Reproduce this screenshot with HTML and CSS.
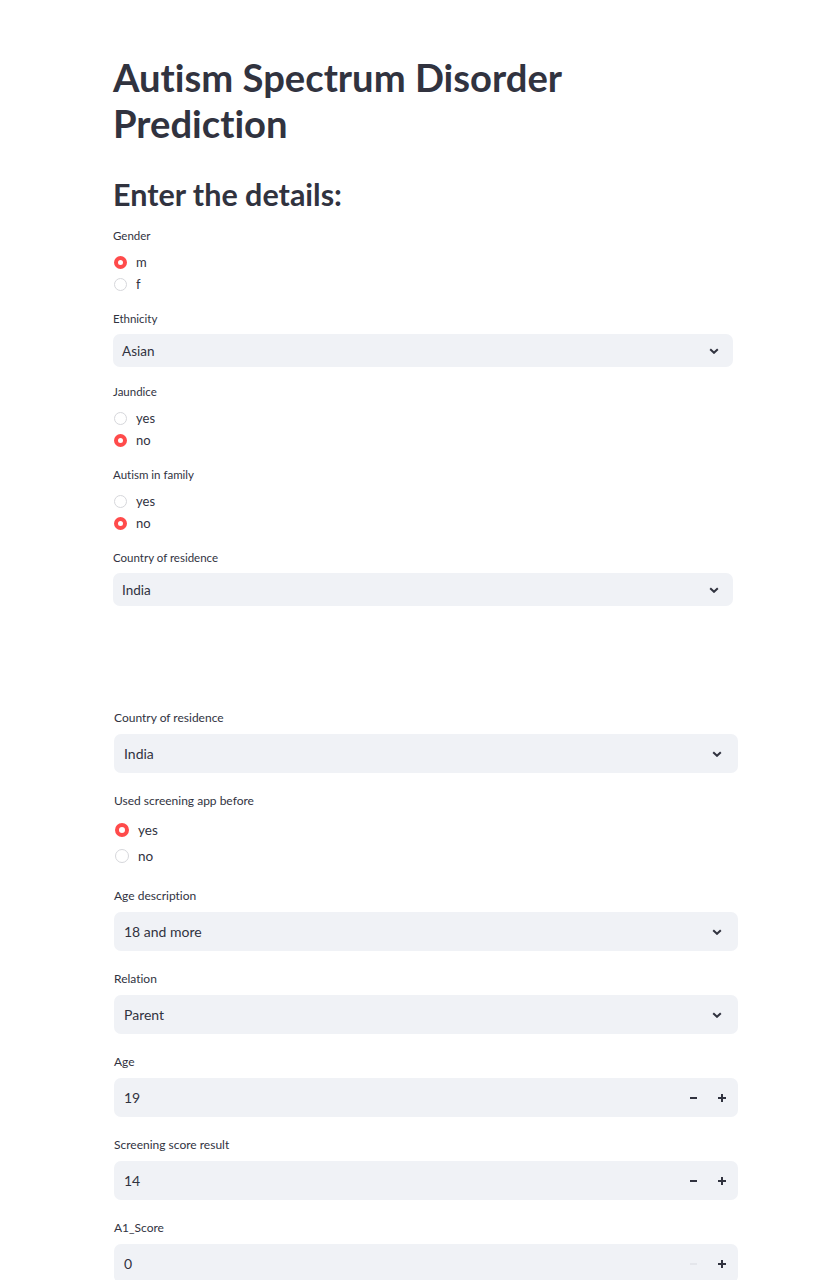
FILE: index.html
```html
<!DOCTYPE html>
<html lang="en">
<head>
<meta charset="utf-8">
<title>Autism Spectrum Disorder Prediction</title>
<link rel="stylesheet" href="styles.css">
</head>
<body>
<main class="page">
  <section class="block block-top">
    <h1 class="title">Autism Spectrum Disorder Prediction</h1>
    <h3 class="subtitle">Enter the details:</h3>

    <div class="field">
      <div class="label">Gender</div>
      <div class="radios">
        <div class="radio on"><span class="dot"></span><span>m</span></div>
        <div class="radio"><span class="dot"></span><span>f</span></div>
      </div>
    </div>

    <div class="field">
      <div class="label">Ethnicity</div>
      <div class="select"><span>Asian</span>
        <svg class="chev" viewBox="0 0 10 6" width="10" height="6"><path d="M1.2 1.2 L5 4.8 L8.8 1.2" fill="none" stroke="#31333f" stroke-width="2"/></svg>
      </div>
    </div>

    <div class="field">
      <div class="label">Jaundice</div>
      <div class="radios">
        <div class="radio"><span class="dot"></span><span>yes</span></div>
        <div class="radio on"><span class="dot"></span><span>no</span></div>
      </div>
    </div>

    <div class="field">
      <div class="label">Autism in family</div>
      <div class="radios">
        <div class="radio"><span class="dot"></span><span>yes</span></div>
        <div class="radio on"><span class="dot"></span><span>no</span></div>
      </div>
    </div>

    <div class="field">
      <div class="label">Country of residence</div>
      <div class="select"><span>India</span>
        <svg class="chev" viewBox="0 0 10 6" width="10" height="6"><path d="M1.2 1.2 L5 4.8 L8.8 1.2" fill="none" stroke="#31333f" stroke-width="2"/></svg>
      </div>
    </div>
  </section>

  <section class="block block-bottom">
    <div class="field">
      <div class="label">Country of residence</div>
      <div class="select"><span>India</span>
        <svg class="chev" viewBox="0 0 10 6" width="10" height="6"><path d="M1.2 1.2 L5 4.8 L8.8 1.2" fill="none" stroke="#31333f" stroke-width="2"/></svg>
      </div>
    </div>

    <div class="field">
      <div class="label">Used screening app before</div>
      <div class="radios">
        <div class="radio on"><span class="dot"></span><span>yes</span></div>
        <div class="radio"><span class="dot"></span><span>no</span></div>
      </div>
    </div>

    <div class="field">
      <div class="label">Age description</div>
      <div class="select"><span>18 and more</span>
        <svg class="chev" viewBox="0 0 10 6" width="10" height="6"><path d="M1.2 1.2 L5 4.8 L8.8 1.2" fill="none" stroke="#31333f" stroke-width="2"/></svg>
      </div>
    </div>

    <div class="field">
      <div class="label">Relation</div>
      <div class="select"><span>Parent</span>
        <svg class="chev" viewBox="0 0 10 6" width="10" height="6"><path d="M1.2 1.2 L5 4.8 L8.8 1.2" fill="none" stroke="#31333f" stroke-width="2"/></svg>
      </div>
    </div>

    <div class="field">
      <div class="label">Age</div>
      <div class="number"><span class="val">19</span>
        <span class="step minus"></span><span class="step plus"></span>
      </div>
    </div>

    <div class="field">
      <div class="label">Screening score result</div>
      <div class="number"><span class="val">14</span>
        <span class="step minus"></span><span class="step plus"></span>
      </div>
    </div>

    <div class="field">
      <div class="label">A1_Score</div>
      <div class="number"><span class="val">0</span>
        <span class="step minus off"></span><span class="step plus"></span>
      </div>
    </div>
  </section>
</main>
</body>
</html>
```

FILE: styles.css
```css
* { box-sizing: border-box; }

html, body {
  margin: 0;
  padding: 0;
  background: #ffffff;
}

body {
  font-family: Lato, "Noto Sans", "Liberation Sans", sans-serif;
  color: #31333f;
  height: 1280px;
  overflow: hidden;
  font-variant-ligatures: none;
}

.page {
  padding-left: 113px;
}

.block-top {
  width: 620px;
  padding-top: 54px;
}

.title {
  margin: 0;
  font-size: 38.2px;
  line-height: 46px;
  font-weight: 700;
  letter-spacing: 0;
  width: 480px;
}

.subtitle {
  margin: 30px 0 0;
  font-size: 30.5px;
  line-height: 36px;
  font-weight: 700;
}

.block-top .subtitle + .field { margin-top: 16px; }

.field { margin-top: 17px; }

.label {
  font-size: 11.5px;
  line-height: 16px;
  margin-bottom: 7px;
  color: #31333f;
}

.radios { display: flex; flex-direction: column; margin-bottom: -1px; }

.radio {
  display: flex;
  align-items: center;
  height: 22px;
  gap: 9px;
  font-size: 13px;
  padding-left: 1px;
}

.dot {
  width: 13px;
  height: 13px;
  border-radius: 50%;
  border: 1px solid #d6d7db;
  background: #fff;
  flex: none;
}

.radio.on .dot {
  border: 4px solid #ff4b4b;
  background: #fff;
}

.select, .number {
  height: 33px;
  background: #f0f2f6;
  border-radius: 7px;
  display: flex;
  align-items: center;
  padding: 0 14px 0 9px;
  font-size: 13.5px;
}

.select span, .number .val { flex: 1; }

.chev { flex: none; }

/* bottom half */
.block-bottom {
  width: 624px;
  margin-left: 1px;
  margin-top: 103px;
}

.block-bottom .field:first-child { margin-top: 0; }
.block-bottom .field { margin-top: 19px; }

.block-bottom .label {
  font-size: 12px;
  line-height: 18px;
  margin-bottom: 7px;
}

.block-bottom .radio {
  height: 26px;
  font-size: 13.5px;
  gap: 9px;
}

.block-bottom .dot { width: 14px; height: 14px; }
.block-bottom .radio.on .dot { border-width: 4.5px; }

.block-bottom .select {
  height: 39px;
  padding: 0 16px 0 10px;
  font-size: 14px;
}

.block-bottom .number {
  height: 39px;
  padding: 0 2px 0 10px;
  font-size: 14px;
}

.step {
  width: 28px;
  height: 20px;
  position: relative;
  flex: none;
}

.step::before, .step::after {
  content: "";
  position: absolute;
  background: #31333f;
  left: 50%;
  top: 50%;
}

.minus::before {
  width: 7px; height: 2px;
  margin: -1px 0 0 -4px;
}
.minus::after { display: none; }
.minus.off::before { background: #e4e6eb; }

.plus::before {
  width: 8px; height: 2px;
  margin: -1px 0 0 -4px;
}
.plus::after {
  width: 2px; height: 8px;
  margin: -4px 0 0 -1px;
}
```
